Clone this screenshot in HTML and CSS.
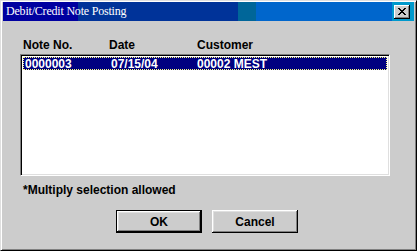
FILE: index.html
```html
<!DOCTYPE html>
<html lang="en">

<head>
    <meta charset="UTF-8">
    <title>Debit/Credit Note Posting</title>
    <link rel="stylesheet" href="styles.css">
</head>

<body>
    <div class="window">
        <div class="titlebar">
            <span class="title">Debit/Credit Note Posting</span>
            <button class="close-btn" type="button">
                <svg width="8" height="7" viewBox="0 0 8 7">
                    <path d="M0 0h2v1h1v1h2v-1h1v-1h2v1h-1v1h-1v1h-1v1h1v1h1v1h1v1h-2v-1h-1v-1h-2v1h-1v1h-2v-1h1v-1h1v-1h1v-1h-1v-1h-1v-1h-1z" fill="#000"/>
                </svg>
            </button>
        </div>

        <div class="content">
            <div class="list-head">
                <span class="col-note">Note No.</span>
                <span class="col-date">Date</span>
                <span class="col-cust">Customer</span>
            </div>

            <!-- 伝票リスト -->
            <div class="listbox">
                <div class="row selected">
                    <span class="col-note">0000003</span>
                    <span class="col-date">07/15/04</span>
                    <span class="col-cust">00002 MEST</span>
                </div>
            </div>

            <div class="note">*Multiply selection allowed</div>

            <div class="buttons">
                <button type="button" class="btn default">OK</button>
                <button type="button" class="btn">Cancel</button>
            </div>
        </div>
    </div>
</body>

</html>
```

FILE: styles.css
```css
html, body {
    margin: 0;
    padding: 0;
}

body {
    font-family: "Liberation Sans", Arial, sans-serif;
    font-size: 12px;
    font-weight: bold;
    background: #cccccc;
}

.window {
    width: 417px;
    height: 251px;
    box-sizing: border-box;
    background: #cccccc;
    border-top: 1px solid #dfdfdf;
    border-left: 1px solid #dfdfdf;
    border-right: 1px solid #000;
    border-bottom: 1px solid #000;
    box-shadow: inset 1px 1px 0 #fff, inset -1px -1px 0 #808080;
    padding: 1px 2px 2px 2px;
    display: flex;
    flex-direction: column;
}

.titlebar {
    height: 19px;
    display: flex;
    align-items: center;
    justify-content: space-between;
    padding: 0 3px 0 3px;
    background: linear-gradient(to right,
        #0000a0 0, #0000a0 75px,
        #003399 75px, #003399 235px,
        #006699 235px, #006699 253px,
        #0066cc 253px, #0066cc 389px,
        #0099cc 389px);
}

.title {
    font-family: "Liberation Serif", "Times New Roman", serif;
    font-weight: normal;
    font-size: 12px;
    color: #fff;
    letter-spacing: -0.2px;
}

.close-btn {
    width: 16px;
    height: 14px;
    padding: 0;
    margin-right: 1px;
    display: flex;
    align-items: center;
    justify-content: center;
    background: #cccccc;
    border: none;
    box-shadow: inset -1px -1px 0 #000, inset 1px 1px 0 #fff, inset -2px -2px 0 #808080;
}

.content {
    flex: 1;
    padding: 17px 24px 0 17px;
    display: flex;
    flex-direction: column;
}

.list-head,
.row {
    display: flex;
    height: 13px;
    align-items: center;
}

.list-head {
    padding-left: 3px;
    margin-bottom: 3px;
}

.col-note {
    width: 86px;
}

.col-date {
    width: 88px;
}

.row .col-date {
    width: 86px;
}

.listbox {
    height: 122px;
    background: #fff;
    border-top: 1px solid #808080;
    border-left: 1px solid #808080;
    border-right: 1px solid #fff;
    border-bottom: 1px solid #fff;
    box-shadow: inset 1px 1px 0 #000, inset -1px -1px 0 #dfdfdf;
    padding: 2px;
    box-sizing: border-box;
}

.row {
    padding-left: 2px;
    color: #000;
}

.row.selected {
    background: #000080;
    color: #fff;
    outline: 1px dotted #ffff80;
    outline-offset: -1px;
}

.note {
    margin-top: 7px;
    padding-left: 3px;
}

.buttons {
    display: flex;
    gap: 10px;
    margin-top: 13px;
    padding-left: 96px;
}

.btn {
    width: 86px;
    height: 23px;
    font-family: "Liberation Sans", Arial, sans-serif;
    font-size: 12px;
    font-weight: bold;
    background: #cccccc;
    border: none;
    box-shadow: inset -1px -1px 0 #000, inset 1px 1px 0 #fff, inset -2px -2px 0 #808080, inset 2px 2px 0 #dfdfdf;
}

.btn.default {
    border: 1px solid #000;
}
```
